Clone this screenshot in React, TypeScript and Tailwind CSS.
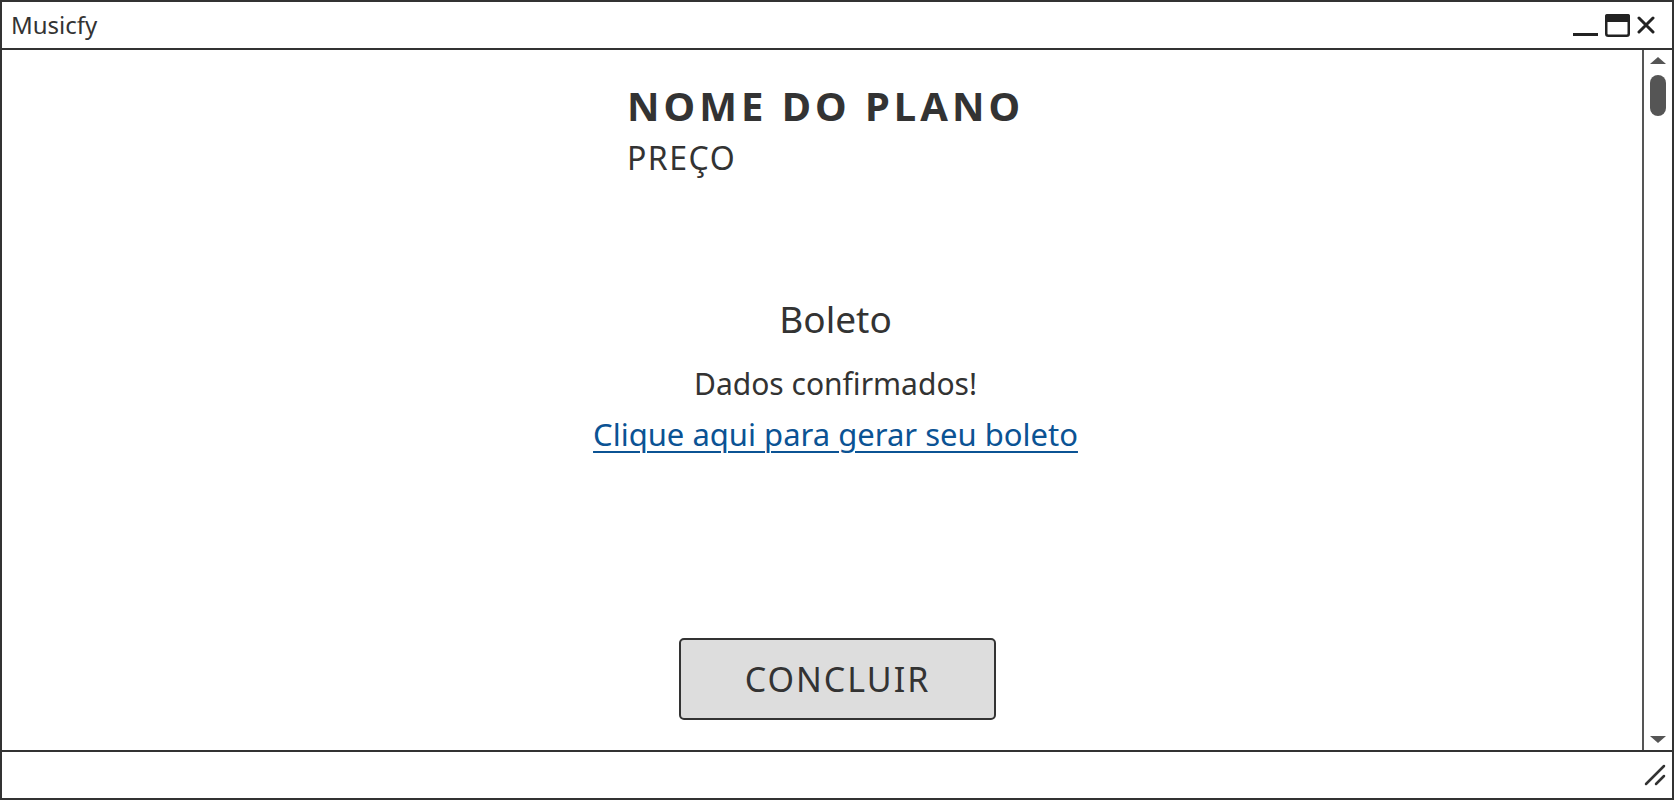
import React from 'react';

const font = { fontFamily: '"Noto Sans", "DejaVu Sans", sans-serif' };

const WindowControls: React.FC = () => (
  <svg width="84" height="24" viewBox="0 0 84 24" fill="none">
    <rect x="2" y="20" width="25" height="3" fill="#222" />
    <rect x="35.25" y="2.25" width="22.5" height="20.5" rx="2" stroke="#222" strokeWidth="2.5" />
    <rect x="34" y="1" width="25" height="8" rx="2" fill="#222" />
    <path d="M68 5L82 19M82 5L68 19" stroke="#222" strokeWidth="3" strokeLinecap="round" />
  </svg>
);

const Arrow: React.FC<{ down?: boolean }> = ({ down }) => (
  <svg width="16" height="7" viewBox="0 0 16 7">
    <path d={down ? 'M0 0H16L8 7Z' : 'M0 7H16L8 0Z'} fill="#555" />
  </svg>
);

const App: React.FC = () => {
  return (
    <div style={font} className="w-[1674px] h-[800px] border-2 border-[#333] flex flex-col bg-white text-[#333] overflow-hidden">
      {/* title bar */}
      <div className="h-[48px] shrink-0 border-b-2 border-[#333] flex items-center justify-between pl-[9px] pr-[17px]">
        <span className="text-[24px] leading-none">Musicfy</span>
        <WindowControls />
      </div>

      {/* body */}
      <div className="h-[700px] shrink-0 flex">
        <div className="flex-1 flex flex-col">
          <div className="pl-[625px] pt-[36px] flex flex-col">
            <h1 className="text-[40px] leading-none font-bold tracking-[4px]">NOME DO PLANO</h1>
            <p className="mt-[16px] text-[32px] leading-none tracking-[1.5px]">PREÇO</p>
          </div>

          <div className="pl-[27px] flex flex-col items-center">
            <h2 className="mt-[126px] text-[37px] leading-none">Boleto</h2>
            <p className="mt-[32px] text-[30px] leading-none">Dados confirmados!</p>
            <a className="mt-[20px] text-[31px] leading-none text-[#0b5394] underline decoration-[2px] underline-offset-[5px] cursor-pointer">
              Clique aqui para gerar seu boleto
            </a>
            <button className="mt-[188px] ml-[4px] w-[317px] h-[82px] border-2 border-[#333] rounded-[5px] bg-[#dddddd] text-[34px] leading-none tracking-[2px] text-[#333]">
              CONCLUIR
            </button>
          </div>
        </div>

        {/* scrollbar */}
        <div className="w-[30px] border-l-2 border-[#555] flex flex-col items-center pt-[7px] pb-[7px]">
          <Arrow />
          <div className="mt-[11px] w-[16px] h-[41px] rounded-full bg-[#555]" />
          <div className="flex-1" />
          <Arrow down />
        </div>
      </div>

      {/* status bar */}
      <div className="flex-1 border-t-2 border-[#333] flex items-center justify-end pr-[6px]">
        <svg width="22" height="22" viewBox="0 0 22 22" fill="none">
          <path d="M2 20L20 2M12 20L20 12" stroke="#333" strokeWidth="2.5" strokeLinecap="round" />
        </svg>
      </div>
    </div>
  );
};

export default App;
